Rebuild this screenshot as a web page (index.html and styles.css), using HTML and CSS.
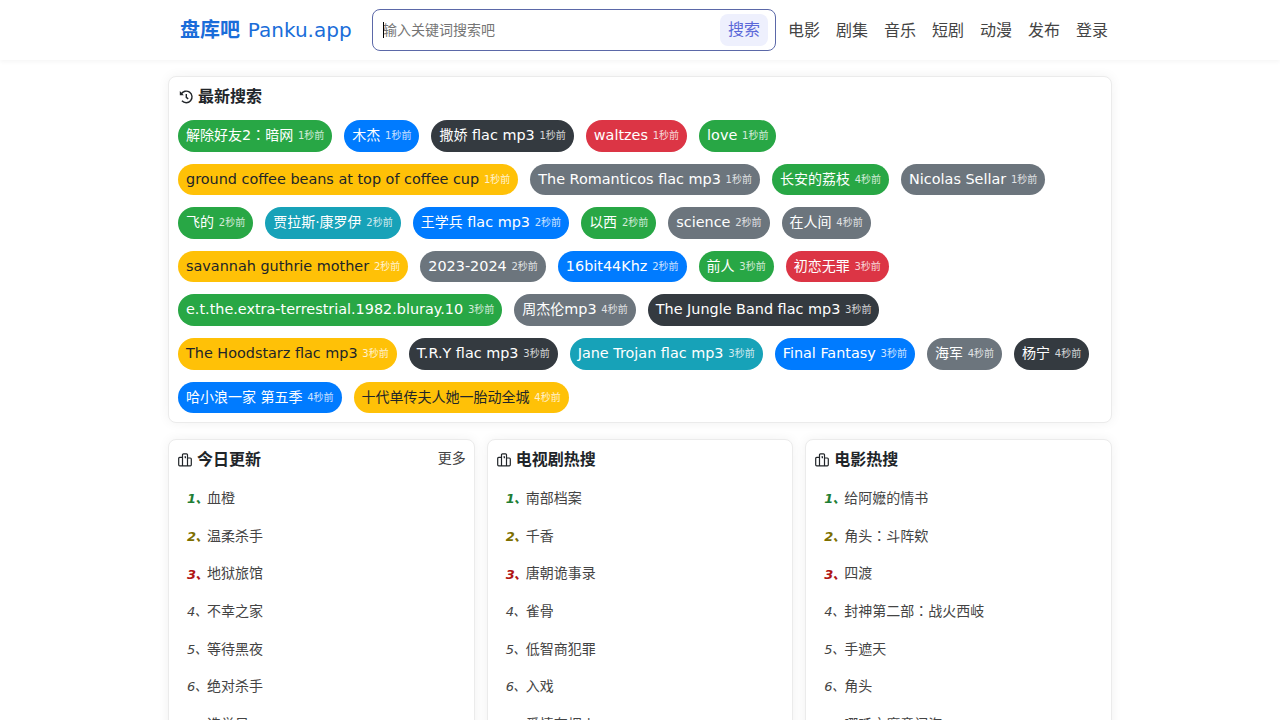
FILE: index.html
```html
<!DOCTYPE html>
<html lang="zh-CN">
<head>
  <meta charset="UTF-8" />
  <meta name="viewport" content="width=device-width, initial-scale=1.0" />
  <title>盘库吧 Panku.app</title>
  <link rel="stylesheet" href="styles.css">
</head>
<body>
  <svg class="sprite">
    <symbol id="rank" viewBox="0 0 14 14">
      <path d="M4.5 12.8V1.8Q4.5.8 5.5.8H8.5Q9.5.8 9.5 1.8V12.8M4.5 4.4H1.7Q.7 4.4.7 5.4V11.8Q.7 12.8 1.7 12.8H12.3Q13.3 12.8 13.3 11.8V6Q13.3 5 12.3 5H9.5M6.5 3.8H7.4V5.2" />
    </symbol>
  </svg>

  <header class="header">
    <div class="header-inner">
      <a class="logo" href="#"><b>盘库吧</b> Panku.app</a>
      <form class="search">
        <span class="caret"></span>
        <input type="text" placeholder="输入关键词搜索吧" />
        <button type="button">搜索</button>
      </form>
      <nav class="nav">
        <a href="#">电影</a>
        <a href="#">剧集</a>
        <a href="#">音乐</a>
        <a href="#">短剧</a>
        <a href="#">动漫</a>
        <a href="#">发布</a>
        <a href="#">登录</a>
      </nav>
    </div>
  </header>

  <main class="container">
    <section class="card recent">
      <h2 class="title">
        <svg class="icon history" viewBox="0 0 16 16"><path d="M3.1 5.2A5.8 5.8 0 1 1 3.9 11.8M8.3 4.9V8.4L10.2 9.9" /><path class="tip" d="M1.8 2V6.2H5.8Z" /></svg>
        最新搜索
      </h2>
      <div class="tags">
        <a class="tag green" href="#"><span class="zh">解除好友</span>2<span class="zh"><span class="mid" lang="zh-TW">：</span>暗网</span> <small>1秒前</small></a>
        <a class="tag blue" href="#"><span class="zh">木杰</span> <small>1秒前</small></a>
        <a class="tag dark" href="#"><span class="zh">撒娇</span> flac mp3 <small>1秒前</small></a>
        <a class="tag red" href="#">waltzes <small>1秒前</small></a>
        <a class="tag green" href="#">love <small>1秒前</small></a>
        <a class="tag yellow" href="#">ground coffee beans at top of coffee cup <small>1秒前</small></a>
        <a class="tag gray" href="#">The Romanticos flac mp3 <small>1秒前</small></a>
        <a class="tag green" href="#"><span class="zh">长安的荔枝</span> <small>4秒前</small></a>
        <a class="tag gray" href="#">Nicolas Sellar <small>1秒前</small></a>
        <a class="tag green" href="#"><span class="zh">飞的</span> <small>2秒前</small></a>
        <a class="tag teal" href="#"><span class="zh">贾拉斯·康罗伊</span> <small>2秒前</small></a>
        <a class="tag blue" href="#"><span class="zh">王学兵</span> flac mp3 <small>2秒前</small></a>
        <a class="tag green" href="#"><span class="zh">以西</span> <small>2秒前</small></a>
        <a class="tag gray" href="#">science <small>2秒前</small></a>
        <a class="tag gray" href="#"><span class="zh">在人间</span> <small>4秒前</small></a>
        <a class="tag yellow" href="#">savannah guthrie mother <small>2秒前</small></a>
        <a class="tag gray" href="#">2023-2024 <small>2秒前</small></a>
        <a class="tag blue" href="#">16bit44Khz <small>2秒前</small></a>
        <a class="tag green" href="#"><span class="zh">前人</span> <small>3秒前</small></a>
        <a class="tag red" href="#"><span class="zh">初恋无罪</span> <small>3秒前</small></a>
        <a class="tag green" href="#">e.t.the.extra-terrestrial.1982.bluray.10 <small>3秒前</small></a>
        <a class="tag gray" href="#"><span class="zh">周杰伦</span>mp3 <small>4秒前</small></a>
        <a class="tag dark" href="#">The Jungle Band flac mp3 <small>3秒前</small></a>
        <a class="tag yellow" href="#">The Hoodstarz flac mp3 <small>3秒前</small></a>
        <a class="tag dark" href="#">T.R.Y flac mp3 <small>3秒前</small></a>
        <a class="tag teal" href="#">Jane Trojan flac mp3 <small>3秒前</small></a>
        <a class="tag blue" href="#">Final Fantasy <small>3秒前</small></a>
        <a class="tag gray" href="#"><span class="zh">海军</span> <small>4秒前</small></a>
        <a class="tag dark" href="#"><span class="zh">杨宁</span> <small>4秒前</small></a>
        <a class="tag blue" href="#"><span class="zh">哈小浪一家 第五季</span> <small>4秒前</small></a>
        <a class="tag yellow" href="#"><span class="zh">十代单传夫人她一胎动全城</span> <small>4秒前</small></a>
      </div>
    </section>

    <div class="columns">
      <section class="card">
        <h2 class="title"><svg class="icon"><use href="#rank" /></svg>今日更新 <a class="more" href="#">更多</a></h2>
        <ul class="list">
          <li><i>1、</i><a href="#">血橙</a></li>
          <li><i>2、</i><a href="#">温柔杀手</a></li>
          <li><i>3、</i><a href="#">地狱旅馆</a></li>
          <li><i>4、</i><a href="#">不幸之家</a></li>
          <li><i>5、</i><a href="#">等待黑夜</a></li>
          <li><i>6、</i><a href="#">绝对杀手</a></li>
          <li><i>7、</i><a href="#">选举风</a></li>
        </ul>
      </section>
      <section class="card">
        <h2 class="title"><svg class="icon"><use href="#rank" /></svg>电视剧热搜</h2>
        <ul class="list">
          <li><i>1、</i><a href="#">南部档案</a></li>
          <li><i>2、</i><a href="#">千香</a></li>
          <li><i>3、</i><a href="#">唐朝诡事录</a></li>
          <li><i>4、</i><a href="#">雀骨</a></li>
          <li><i>5、</i><a href="#">低智商犯罪</a></li>
          <li><i>6、</i><a href="#">入戏</a></li>
          <li><i>7、</i><a href="#">爱情有烟火</a></li>
        </ul>
      </section>
      <section class="card">
        <h2 class="title"><svg class="icon"><use href="#rank" /></svg>电影热搜</h2>
        <ul class="list">
          <li><i>1、</i><a href="#">给阿嬷的情书</a></li>
          <li><i>2、</i><a href="#">角头<span class="mid" lang="zh-TW">：</span>斗阵欸</a></li>
          <li><i>3、</i><a href="#">四渡</a></li>
          <li><i>4、</i><a href="#">封神第二部<span class="mid" lang="zh-TW">：</span>战火西岐</a></li>
          <li><i>5、</i><a href="#">手遮天</a></li>
          <li><i>6、</i><a href="#">角头</a></li>
          <li><i>7、</i><a href="#">哪吒之魔童闹海</a></li>
        </ul>
      </section>
    </div>
  </main>
</body>
</html>
```
FILE: styles.css
```css
* {
  margin: 0;
  padding: 0;
  box-sizing: border-box;
}
body {
  height: 720px;
  overflow: hidden;
  font-family: "DejaVu Sans", "Noto Sans CJK SC", sans-serif;
  font-size: 14px;
  line-height: 1.4;
  color: #212529;
  background: #fff;
}
a {
  color: inherit;
  text-decoration: none;
}
.sprite {
  display: none;
}
/* full-width colon centred in its cell */
.mid {
  font-family: "Noto Sans CJK TC", sans-serif;
  line-height: 1;
}
.header {
  height: 60px;
  background: #fff;
  box-shadow: 0 2px 4px rgba(0, 0, 0, 0.04);
}
.header-inner {
  display: flex;
  align-items: center;
  width: 944px;
  height: 60px;
  margin: 0 auto;
  padding-left: 12px;
}
.logo {
  width: 192px;
  font-size: 20px;
  word-spacing: 1.5px;
  color: #1a6dd9;
  white-space: nowrap;
}
.search {
  position: relative;
  display: flex;
  align-items: center;
  width: 404px;
  height: 42px;
  padding: 0 7px 0 10px;
  border: 1px solid #5b68a8;
  border-radius: 8px;
}
.caret {
  position: absolute;
  left: 10px;
  top: 12px;
  width: 1px;
  height: 16px;
  background: #000;
}
.search input {
  flex: 1;
  min-width: 0;
  padding-top: 1px;
  border: none;
  outline: none;
  font: inherit;
}
.search input::placeholder {
  color: #757575;
}
.search button {
  width: 48px;
  height: 32px;
  border: none;
  border-radius: 8px;
  font: inherit;
  font-size: 16px;
  color: #5a67d8;
  background: #eef0fd;
}
.nav {
  display: flex;
  gap: 16px;
  margin-left: 12px;
  padding-top: 2px;
  font-size: 16px;
  color: #444;
}
.container {
  width: 944px;
  margin: 16px auto 0;
}
.card {
  border: 1px solid #ebebeb;
  border-radius: 8px;
  background: #fff;
  box-shadow: 0 0 12px rgba(0, 0, 0, 0.06);
}
.recent {
  height: 347px;
  padding: 0 9px;
}
.title {
  display: flex;
  align-items: center;
  height: 40px;
  font-size: 16px;
}
.icon {
  width: 14px;
  height: 14px;
  margin-right: 5px;
  fill: none;
  stroke: #212529;
  stroke-width: 1.2;
}
.history {
  width: 16px;
  height: 16px;
  margin-right: 4px;
  stroke-width: 1.4;
}
.tip {
  fill: #212529;
  stroke: none;
}
.tags {
  display: flex;
  flex-wrap: wrap;
  gap: 12px;
  padding-top: 3px;
}
.tag {
  height: 31.6px;
  padding: 6px 8px;
  border-radius: 16px;
  font-size: 14.4px;
  line-height: 19.6px;
  color: #fff;
  white-space: nowrap;
}
.tag .zh {
  font-size: 14px;
}
.tag small {
  margin-left: 0.2px;
  font-size: 10px;
  line-height: 1;
  vertical-align: 1px;
  color: #fff;
  opacity: 0.8;
}
.green {
  background: #28a745;
}
.blue {
  background: #007bff;
}
.dark {
  background: #343a40;
}
.red {
  background: #dc3545;
}
.yellow {
  color: #212529;
  background: #ffc107;
}
.gray {
  background: #6c757d;
}
.teal {
  background: #17a2b8;
}
.columns {
  display: grid;
  grid-template-columns: repeat(3, 1fr);
  gap: 12px;
  margin-top: 16px;
}
.columns .card {
  padding: 0 8px 0 9px;
}
.more {
  margin-left: auto;
  padding-bottom: 2px;
  font-size: 14px;
  font-weight: normal;
  color: #444;
}
.list {
  list-style: none;
  padding-left: 9px;
  color: #444;
}
.list li {
  display: flex;
  align-items: center;
  height: 37.65px;
}
.list i {
  width: 20px;
  padding-top: 1px;
  font-size: 13px;
  letter-spacing: -0.6px;
  white-space: nowrap;
}
.list li:nth-child(-n+3) i {
  font-weight: bold;
}
.list li:nth-child(1) i {
  color: #1e7e34;
}
.list li:nth-child(2) i {
  color: #7d6f00;
}
.list li:nth-child(3) i {
  color: #b01515;
}
```
